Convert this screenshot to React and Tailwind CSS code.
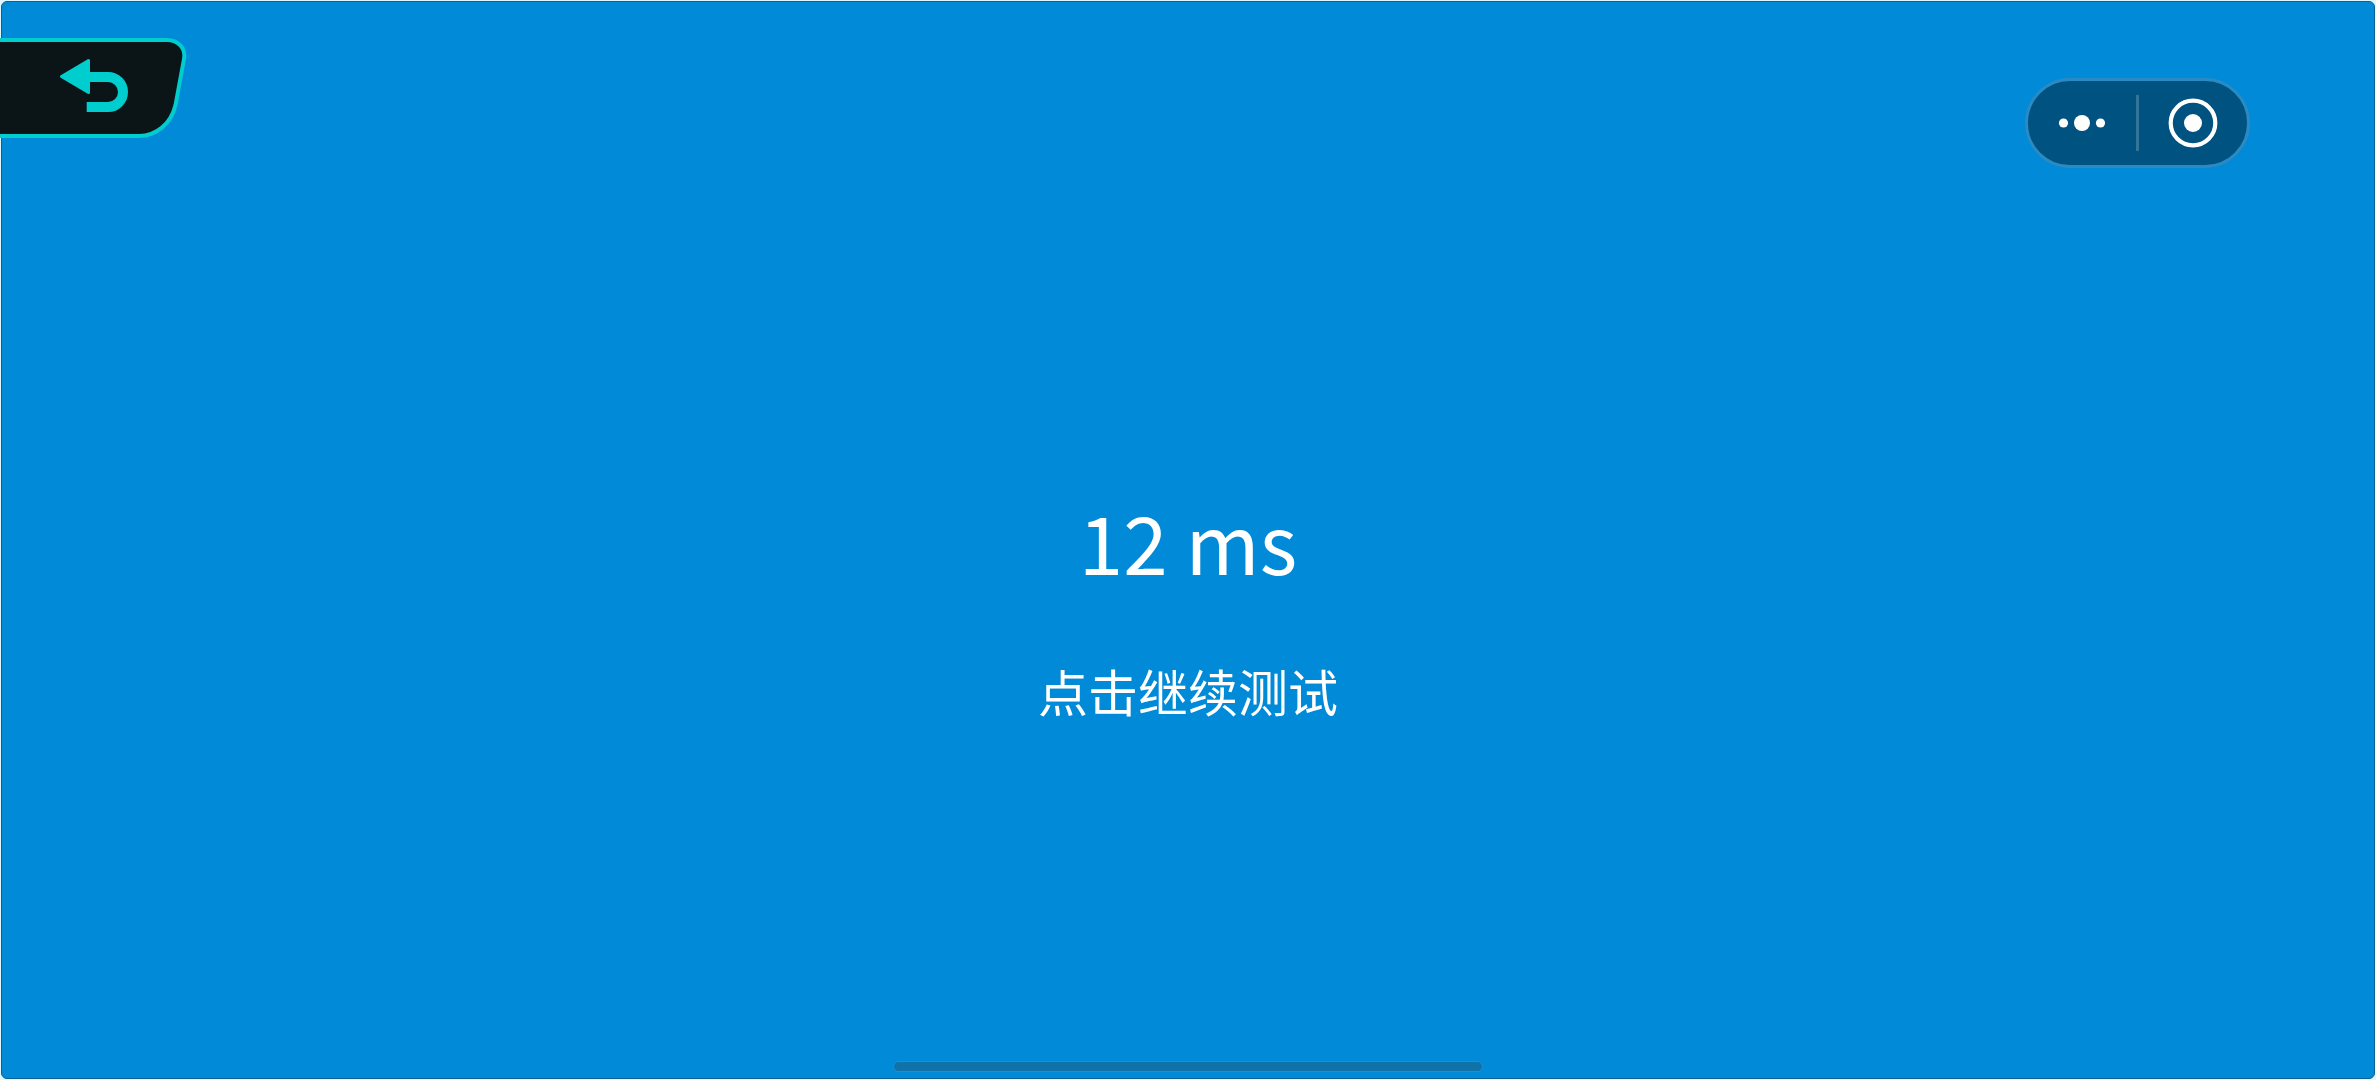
import { useState } from "react";

function BackButton() {
  return (
    <button type="button" aria-label="返回" className="pointer-events-auto cursor-pointer">
      <svg width="188" height="104" viewBox="0 0 188 104" className="block">
        <path
          d="M-6 4H167C178 4 186 12 184 23L175.500 69C171 88 156 100 139 100H-6Z"
          fill="#0b1518"
          stroke="#00cdcd"
          strokeWidth="4"
        />
        {/* Arrow head and hooked tail */}
        <path
          d="M61.500 40.500L88.500 24.500V56.500Z"
          fill="#00cdcd"
          stroke="#00cdcd"
          strokeWidth="3"
          strokeLinejoin="round"
        />
        <path d="M87 41H108A15 15 0 0 1 108 71H86.700" fill="none" stroke="#00cdcd" strokeWidth="10" />
      </svg>
    </button>
  );
}

function Capsule() {
  return (
    <div className="pointer-events-auto mt-[76px] mr-[126px] flex h-[90px] w-[225px] items-center rounded-full border-3 border-[#2a8bc4] bg-[#005280]">
      <button type="button" aria-label="更多" className="flex h-full flex-1 cursor-pointer items-center justify-center">
        <svg width="48" height="18" viewBox="0 0 48 18" fill="#fff">
          <circle cx="5.500" cy="9" r="4.600" />
          <circle cx="24" cy="9" r="8" />
          <circle cx="42.500" cy="9" r="4.600" />
        </svg>
      </button>
      <div className="h-14 w-[3px] bg-[#337499]" />
      <button type="button" aria-label="关闭" className="flex h-full flex-1 cursor-pointer items-center justify-center">
        <svg width="50" height="50" viewBox="0 0 50 50">
          <circle cx="25" cy="25" r="22.300" fill="none" stroke="#fff" strokeWidth="4.200" />
          <circle cx="25" cy="25" r="9" fill="#fff" />
        </svg>
      </button>
    </div>
  );
}

function App() {
  const [result] = useState(12);

  return (
    <div className="flex h-screen bg-[#dff6fa] p-px font-['Noto_Sans_CJK_SC',sans-serif]">
      <main className="relative flex flex-1 rounded-md border border-[#0a5f94] bg-[#008ad8] text-white">
        {/* The whole screen is the tap target */}
        <button type="button" className="grid flex-1 cursor-pointer grid-rows-[1fr_auto_1fr] justify-items-center">
          <span className="row-start-2 text-[80px] leading-[96px]">{result} ms</span>
          <span className="row-start-3 self-start pt-18 text-[50px] leading-[60px]">点击继续测试</span>
        </button>

        {/* Floating controls */}
        <div className="pointer-events-none absolute -inset-x-0.5 top-0 flex items-start justify-between">
          <div className="mt-[34px]">
            <BackButton />
          </div>
          <Capsule />
        </div>

        {/* Home indicator */}
        <div className="pointer-events-none absolute inset-x-0 bottom-[7px] flex justify-center">
          <div className="h-[9px] w-[588px] rounded-full bg-[#0f72a9] ring-1 ring-[#1591d9]" />
        </div>
      </main>
    </div>
  );
}

export default App;
